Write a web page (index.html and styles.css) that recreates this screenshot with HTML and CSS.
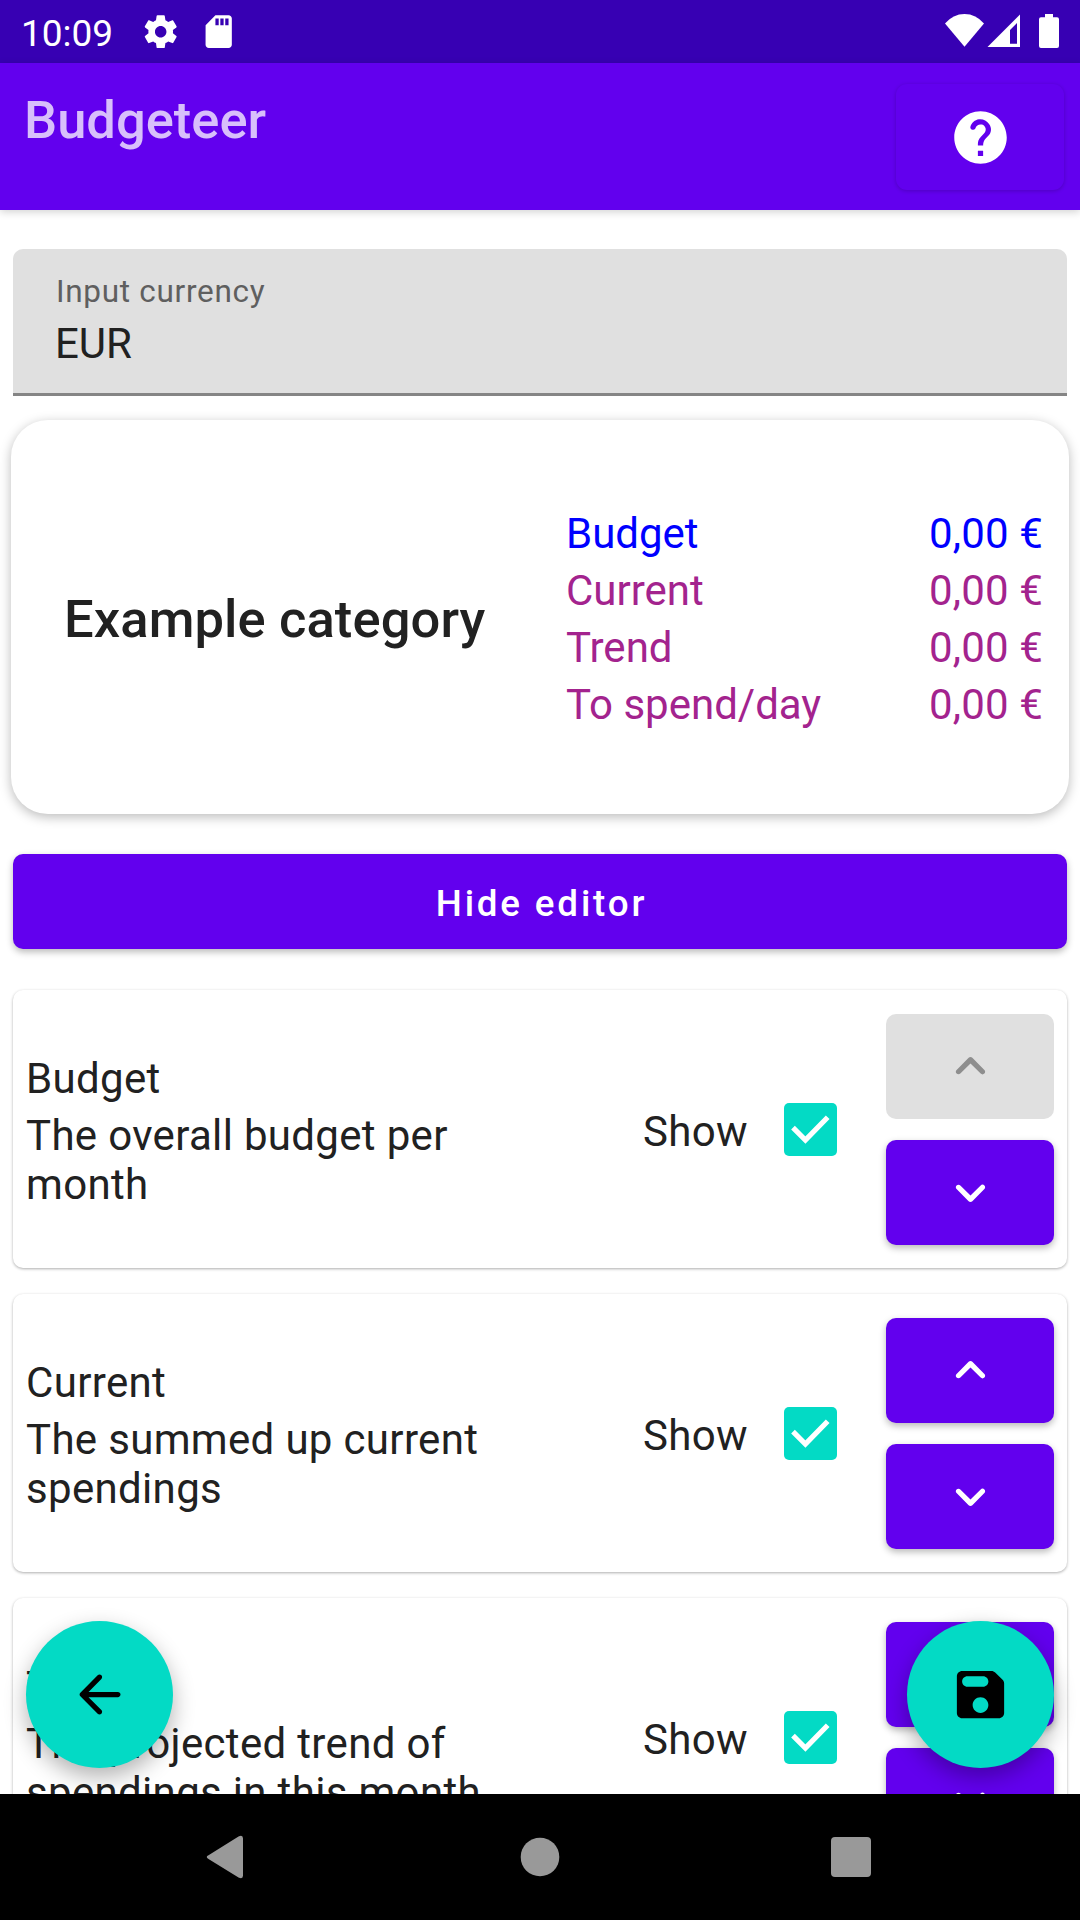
FILE: index.html
```html
<!DOCTYPE html>
<html lang="en">
<head>
<meta charset="utf-8">
<title>Budgeteer</title>
<link rel="stylesheet" href="styles.css">
</head>
<body>
<svg class="defs" aria-hidden="true">
  <symbol id="up" viewBox="0 0 24 24"><path d="M8.12 14.71L12 10.83l3.88 3.88c.39.39 1.02.39 1.41 0 .39-.39.39-1.02 0-1.41L12.7 8.71c-.39-.39-1.02-.39-1.41 0L6.7 13.3c-.39.39-.39 1.02 0 1.41.39.38 1.03.39 1.42 0z"/></symbol>
  <symbol id="down" viewBox="0 0 24 24"><path d="M8.12 9.29L12 13.17l3.88-3.88c.39-.39 1.02-.39 1.41 0 .39.39.39 1.02 0 1.41l-4.59 4.59c-.39.39-1.02.39-1.41 0L6.7 10.7c-.39-.39-.39-1.02 0-1.41.39-.38 1.03-.39 1.42 0z"/></symbol>
  <symbol id="check" viewBox="0 0 53 53"><rect width="53" height="53" rx="5" fill="#03dac5"/><path d="M9 24.700L21.400 37.100L43.700 14.300" fill="none" stroke="#fff" stroke-width="5.200"/></symbol>
</svg>

<header class="status">
  <span class="clock">10:09</span>
  <svg class="gear" viewBox="0 0 24 24"><path d="M19.43 12.98c.04-.32.07-.64.07-.98s-.03-.66-.07-.98l2.11-1.65c.19-.15.24-.42.12-.64l-2-3.46c-.12-.22-.39-.3-.61-.22l-2.49 1c-.52-.4-1.08-.73-1.69-.98l-.38-2.65C14.46 2.18 14.25 2 14 2h-4c-.25 0-.46.18-.49.42l-.38 2.65c-.61.25-1.17.59-1.69.98l-2.49-1c-.23-.09-.49 0-.61.22l-2 3.46c-.13.22-.07.49.12.64l2.11 1.65c-.04.32-.07.65-.07.98s.03.66.07.98l-2.11 1.65c-.19.15-.24.42-.12.64l2 3.46c.12.22.39.3.61.22l2.49-1c.52.4 1.08.73 1.69.98l.38 2.65c.03.24.24.42.49.42h4c.25 0 .46-.18.49-.42l.38-2.65c.61-.25 1.17-.59 1.69-.98l2.49 1c.23.09.49 0 .61-.22l2-3.46c.12-.22.07-.49-.12-.64l-2.11-1.65zM12 15.500c-1.930 0-3.500-1.570-3.500-3.500s1.570-3.500 3.500-3.500 3.500 1.570 3.500 3.500-1.570 3.500-3.500 3.500z"/></svg>
  <svg class="sd" viewBox="0 0 24 24"><path d="M18 2h-8L4.020 8 4 20c0 1.100.9 2 2 2h12c1.100 0 2-.9 2-2V4c0-1.100-.9-2-2-2zm-6 6h-2V4h2v4zm3 0h-2V4h2v4zm3 0h-2V4h2v4z"/></svg>
  <svg class="signals" viewBox="0 0 116 36">
    <path d="M0 9.500Q8 0 19.500 0T39 9.500L19.500 32.700Z"/>
    <path fill-rule="evenodd" d="M42.500 33L75 .5V33ZM65 16V29.700H72V9Z"/>
    <path d="M100 0H108V3.300H112Q114 3.300 114 5.300V32Q114 34 112 34H96Q94 34 94 32V5.300Q94 3.300 96 3.300H100Z"/>
  </svg>
</header>

<div class="appbar">
  <h1 class="title">Budgeteer</h1>
  <button class="help" aria-label="Help"><svg class="icon" viewBox="0 0 24 24"><path d="M12 2C6.480 2 2 6.480 2 12s4.480 10 10 10 10-4.480 10-10S17.520 2 12 2zm1 17h-2v-2h2v2zm2.070-7.750l-.9.920c-.5.510-.86.970-1.040 1.690-.08.320-.13.680-.13 1.140h-2v-.5c0-.46.080-.9.220-1.310.2-.58.530-1.100.950-1.520l1.240-1.260c.46-.44.680-1.100.550-1.800-.13-.72-.69-1.330-1.390-1.530-1.110-.31-2.140.32-2.470 1.270-.12.370-.43.650-.82.650h-.3C8.400 9 8 8.440 8.160 7.880c.43-1.470 1.680-2.590 3.230-2.830 1.520-.24 2.970.55 3.870 1.800 1.180 1.630.83 3.380-.19 4.400z"/></svg></button>
</div>

<main class="content">
  <div class="field">
    <div class="field-label">Input currency</div>
    <div class="field-value">EUR</div>
  </div>

  <section class="preview">
    <h2 class="category">Example category</h2>
    <div class="rows">
      <div class="row budget"><span>Budget</span><span>0,00 €</span></div>
      <div class="row"><span>Current</span><span>0,00 €</span></div>
      <div class="row"><span>Trend</span><span>0,00 €</span></div>
      <div class="row"><span>To spend/day</span><span>0,00 €</span></div>
    </div>
  </section>

  <button class="toggle">Hide editor</button>

  <div class="editor">
    <section class="item">
      <div class="info"><div>Budget</div><div>The overall budget per month</div></div>
      <span class="show">Show</span>
      <svg class="check"><use href="#check"/></svg>
      <div class="moves">
        <button class="move off" aria-label="Move up"><svg class="icon"><use href="#up"/></svg></button>
        <button class="move" aria-label="Move down"><svg class="icon"><use href="#down"/></svg></button>
      </div>
    </section>
    <section class="item">
      <div class="info"><div>Current</div><div>The summed up current spendings</div></div>
      <span class="show">Show</span>
      <svg class="check"><use href="#check"/></svg>
      <div class="moves">
        <button class="move" aria-label="Move up"><svg class="icon"><use href="#up"/></svg></button>
        <button class="move" aria-label="Move down"><svg class="icon"><use href="#down"/></svg></button>
      </div>
    </section>
    <section class="item">
      <div class="info"><div>Trend</div><div>The projected trend of spendings in this month</div></div>
      <span class="show">Show</span>
      <svg class="check"><use href="#check"/></svg>
      <div class="moves">
        <button class="move" aria-label="Move up"><svg class="icon"><use href="#up"/></svg></button>
        <button class="move" aria-label="Move down"><svg class="icon"><use href="#down"/></svg></button>
      </div>
    </section>
  </div>

  <button class="fab back" aria-label="Back"><svg class="icon" viewBox="0 0 24 24"><path d="M19 11H7.830l4.880-4.880c.39-.39.39-1.030 0-1.420-.39-.39-1.020-.39-1.410 0l-6.590 6.590c-.39.390-.39 1.020 0 1.410l6.590 6.590c.39.390 1.020.390 1.410 0 .39-.39.39-1.020 0-1.410L7.830 13H19c.55 0 1-.45 1-1s-.45-1-1-1z"/></svg></button>
  <button class="fab save" aria-label="Save"><svg class="icon" viewBox="0 0 24 24"><path d="M17.590 3.590c-.38-.38-.89-.59-1.420-.59H5c-1.110 0-2 .9-2 2v14c0 1.100.9 2 2 2h14c1.100 0 2-.9 2-2V7.830c0-.53-.21-1.040-.59-1.410l-2.820-2.830zM12 19c-1.660 0-3-1.340-3-3s1.340-3 3-3 3 1.340 3 3-1.340 3-3 3zm1-10H7c-1.100 0-2-.9-2-2s.9-2 2-2h6c1.100 0 2 .9 2 2s-.9 2-2 2z"/></svg></button>
</main>

<nav class="navbar">
  <svg class="nav-icon" viewBox="0 0 60 60"><path d="M9.500 28.300L39.500 9.500Q44 7.500 44 11.500V48.500Q44 52.500 39.500 50.500L9.500 32Q6 30 9.500 28.300Z"/></svg>
  <svg class="nav-icon" viewBox="0 0 60 60"><circle cx="30" cy="30" r="19.300"/></svg>
  <svg class="nav-icon" viewBox="0 0 60 60"><rect x="10" y="10" width="40" height="40" rx="4"/></svg>
</nav>
</body>
</html>
```
FILE: styles.css
```css
* { box-sizing: border-box; margin: 0; padding: 0; }
body {
  width: 1080px;
  height: 1920px;
  overflow: hidden;
  display: flex;
  flex-direction: column;
  background: #fff;
  color: #212121;
  font: 400 42px/49px Roboto, sans-serif;
}
button { border: 0; font-family: inherit; }
svg { display: block; flex: none; fill: currentColor; }
.defs { width: 0; height: 0; position: absolute; }
.icon { width: 63px; height: 63px; }

.status {
  height: 63px;
  flex: none;
  display: flex;
  align-items: flex-start;
  padding: 0 20px 0 21px;
  background: #3700b3;
  color: #fff;
}
.clock { width: 120px; padding-top: 12px; font-size: 37px; line-height: 43px; }
.gear, .sd { width: 39.400px; height: 39.400px; margin-top: 12px; }
.sd { margin-left: 18.500px; }
.signals { width: 116px; height: 36px; margin: 14px 0 0 auto; transform: translateX(1px); }

.appbar {
  height: 147px;
  flex: none;
  display: flex;
  justify-content: space-between;
  padding: 21px 16px 0 24px;
  background: #6200ee;
  color: #fff;
  box-shadow: 0 2px 8px rgba(0, 0, 0, .18);
  z-index: 1;
}
.title { padding-top: 5px; font-size: 52.500px; line-height: 62px; font-weight: 500; color: #d8bffb; }
.help {
  width: 168px;
  height: 106px;
  display: grid;
  place-items: center;
  border-radius: 11px;
  background: #6200ee;
  color: #fff;
  box-shadow: 0 1px 4px rgba(0, 0, 0, .2);
}

.content {
  flex: 1;
  min-height: 0;
  position: relative;
  overflow: hidden;
  display: flex;
  flex-direction: column;
}
.field {
  height: 147px;
  flex: none;
  margin: 39px 13px 0;
  padding: 24px 42px 0;
  background: #e0e0e0;
  border-radius: 10px 10px 0 0;
  border-bottom: 3px solid #858585;
}
.field-label { padding-left: 1px; font-size: 31.500px; line-height: 37px; letter-spacing: .7px; color: #5f5f5f; }
.field-value { padding-top: 9px; }

.preview {
  height: 394px;
  flex: none;
  margin: 24px 11px 0;
  padding: 3px 26px 0 53px;
  display: flex;
  align-items: center;
  justify-content: space-between;
  border-radius: 37px;
  box-shadow: 0 3px 12px rgba(0, 0, 0, .27);
}
.category { font-size: 52.500px; line-height: 62px; font-weight: 500; letter-spacing: .1px; }
.rows { width: 477px; display: grid; gap: 8px; color: #a3238e; }
.row { display: flex; justify-content: space-between; }
.row span:last-child { letter-spacing: .15px; }
.row.budget { color: #00f; }

.toggle {
  height: 95px;
  flex: none;
  margin: 40px 13px 0;
  padding: 3px 0 0 3px;
  border-radius: 10px;
  background: #6200ee;
  color: #fff;
  font-size: 36.750px;
  font-weight: 500;
  letter-spacing: 2.830px;
  box-shadow: 0 3px 7px rgba(0, 0, 0, .28);
}

.editor { margin: 41px 13px 0; display: grid; gap: 26px; }
.item {
  height: 278px;
  display: flex;
  align-items: center;
  padding: 0 13px;
  border-radius: 10px;
  letter-spacing: .33px;
  box-shadow: 0 1px 3px rgba(0, 0, 0, .32);
}
.info { width: 520px; display: grid; gap: 8px; padding-top: 5px; margin-right: 97px; }
.show { width: 141px; padding-top: 5px; }
.check { width: 53px; height: 53px; }
.moves { display: grid; gap: 21px; margin-left: auto; }
.move {
  width: 168px;
  height: 105px;
  display: grid;
  place-items: center;
  border-radius: 10px;
  background: #6200ee;
  color: #fff;
  box-shadow: 0 3px 7px rgba(0, 0, 0, .28);
}
.move.off { background: #e0e0e0; color: #8e8e8e; box-shadow: none; }

/* floating actions over the scrolling list */
.fab {
  position: absolute;
  bottom: 26px;
  width: 147px;
  height: 147px;
  display: grid;
  place-items: center;
  border-radius: 50%;
  background: #03dac5;
  color: #000;
  box-shadow: 0 9px 22px rgba(0, 0, 0, .3);
}
.back { left: 26px; }
.save { right: 26px; }

.navbar {
  height: 126px;
  flex: none;
  display: flex;
  justify-content: center;
  align-items: center;
  gap: 251px;
  background: #000;
  color: #999;
  z-index: 1;
}
.nav-icon { width: 60px; height: 60px; }
```
